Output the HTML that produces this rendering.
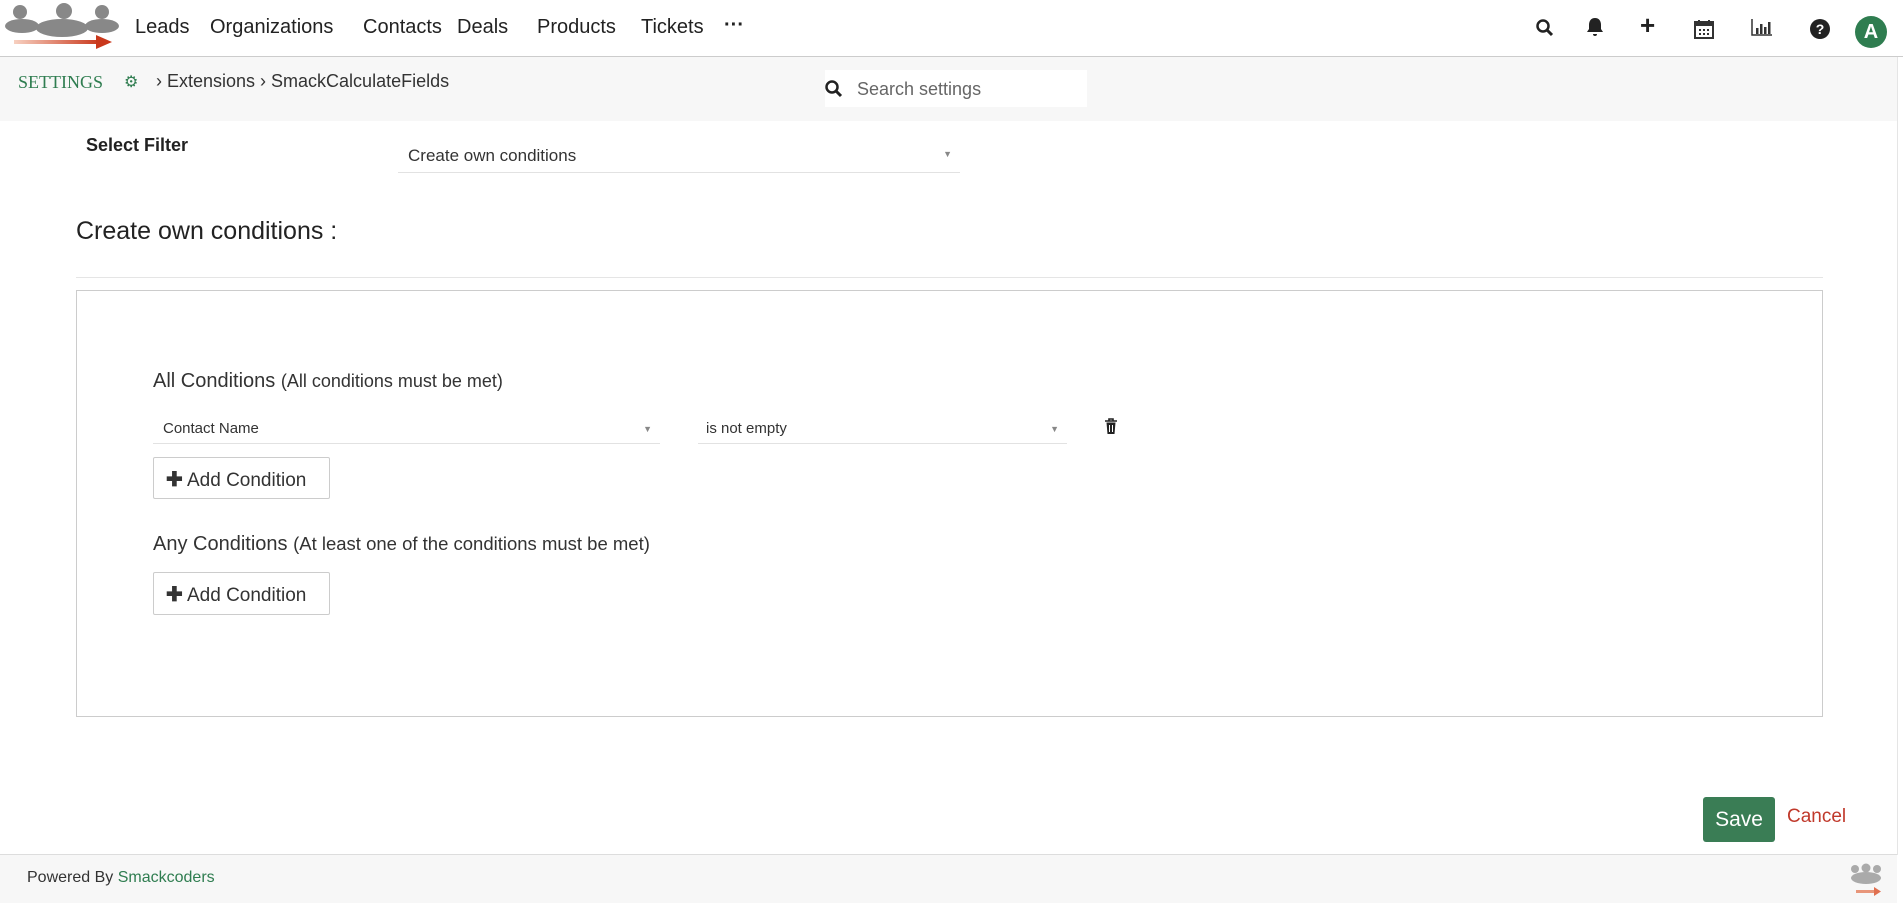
<!DOCTYPE html>
<html><head><meta charset="utf-8"><style>
*{box-sizing:border-box;margin:0;padding:0}
body{width:1903px;height:903px;position:relative;background:#fff;font-family:"Liberation Sans",sans-serif;color:#333;overflow:hidden}
.a{position:absolute;white-space:nowrap}
.nav{font-size:20px;color:#222;top:16px}
.sel{position:absolute;border-bottom:1px solid #e2e2e2;font-size:16px;color:#333}
.sel .ar{position:absolute;right:8px;top:9px;font-size:9px;color:#888}
.btn{position:absolute;border:1px solid #ccc;border-radius:2px;background:#fff;font-size:19px;color:#333;padding:9px 12px}
</style></head><body>
<div class="a" style="left:0;top:0;width:1903px;height:57px;border-bottom:1px solid #ccc;background:#fff"></div>
<svg class="a" style="left:2px;top:2px" width="120" height="48" viewBox="0 0 120 48">
<g fill="#888"><circle cx="18" cy="10" r="7"/><circle cx="62" cy="9" r="8"/><circle cx="100" cy="10" r="7"/>
<ellipse cx="20" cy="24" rx="17" ry="7"/><ellipse cx="100" cy="24" rx="17" ry="7"/><ellipse cx="60" cy="26" rx="26" ry="9"/></g>
<defs><linearGradient id="g" x1="0" x2="1"><stop offset="0" stop-color="#f7d0c0"/><stop offset="1" stop-color="#c9381c"/></linearGradient></defs>
<rect x="12" y="38" width="86" height="4" fill="url(#g)"/><polygon points="94,33 110,40 94,47" fill="#c9381c"/></svg>
<div class="a nav" style="left:135px">Leads</div>
<div class="a nav" style="left:210px">Organizations</div>
<div class="a nav" style="left:363px">Contacts</div>
<div class="a nav" style="left:457px">Deals</div>
<div class="a nav" style="left:537px">Products</div>
<div class="a nav" style="left:641px">Tickets</div>
<div class="a" style="left:724px;top:14px;font-size:20px;font-weight:bold;color:#222">···</div>
<svg class="a" style="left:1535px;top:18px" width="20" height="20" viewBox="0 0 20 20"><circle cx="8" cy="8" r="5.5" fill="none" stroke="#222" stroke-width="2.5"/><path d="M12 12l5 5" stroke="#222" stroke-width="3"/></svg>
<svg class="a" style="left:1586px;top:17px" width="18" height="20" viewBox="0 0 18 20"><path d="M9 1c-4 0-6 3-6 7v4l-2 3h16l-2-3V8c0-4-2-7-6-7z M7 17h4a2 2 0 01-4 0z" fill="#222"/></svg>
<div class="a" style="left:1640px;top:10px;font-size:26px;font-weight:bold;color:#222">+</div>
<svg class="a" style="left:1693px;top:18px" width="22" height="22" viewBox="0 0 22 22"><rect x="2" y="4" width="18" height="16" fill="none" stroke="#333" stroke-width="2"/><rect x="2" y="4" width="18" height="4" fill="#333"/><path d="M6 2v4M16 2v4" stroke="#333" stroke-width="2"/><g fill="#333"><rect x="6" y="11" width="2" height="2"/><rect x="10" y="11" width="2" height="2"/><rect x="14" y="11" width="2" height="2"/><rect x="6" y="15" width="2" height="2"/><rect x="10" y="15" width="2" height="2"/><rect x="14" y="15" width="2" height="2"/></g></svg>
<svg class="a" style="left:1751px;top:18px" width="22" height="20" viewBox="0 0 22 20"><path d="M1 1v16h20" fill="none" stroke="#333" stroke-width="1.5"/><g fill="#333"><rect x="5" y="10" width="2.5" height="6"/><rect x="9" y="6" width="2.5" height="10"/><rect x="13" y="9" width="2.5" height="7"/><rect x="17" y="4" width="2.5" height="12"/></g></svg>
<svg class="a" style="left:1810px;top:19px" width="20" height="20" viewBox="0 0 20 20"><circle cx="10" cy="10" r="10" fill="#222"/><text x="10" y="15" font-family="Liberation Sans" font-weight="bold" font-size="14" fill="#fff" text-anchor="middle">?</text></svg>
<div class="a" style="left:1855px;top:16px;width:32px;height:32px;border-radius:50%;background:#2f7d50;color:#fff;font-weight:bold;font-size:20px;text-align:center;line-height:32px">A</div>
<div class="a" style="left:0;top:57px;width:1897px;height:64px;background:#f7f7f7"></div>
<div class="a" style="left:1897px;top:57px;width:6px;height:798px;background:#fff;border-left:1px solid #e5e5e5"></div>
<div class="a" style="left:18px;top:72px;font-size:18px;color:#2f7d50;font-family:'Liberation Serif',serif">SETTINGS</div>
<div class="a" style="left:124px;top:72px;font-size:16px;color:#2f7d50">⚙</div>
<div class="a" style="left:156px;top:71px;font-size:18px;color:#333">› Extensions › SmackCalculateFields</div>
<div class="a" style="left:825px;top:70px;width:262px;height:37px;background:#fff"></div>
<svg class="a" style="left:824px;top:79px" width="20" height="20" viewBox="0 0 20 20"><circle cx="8" cy="8" r="5.5" fill="none" stroke="#222" stroke-width="2.5"/><path d="M12 12l5 5" stroke="#222" stroke-width="3"/></svg>
<div class="a" style="left:857px;top:79px;font-size:18px;color:#666">Search settings</div>
<div class="a" style="left:86px;top:135px;font-size:18px;font-weight:bold;color:#222">Select Filter</div>
<div class="sel" style="left:398px;top:140px;width:562px;height:33px"><span style="position:absolute;left:10px;top:6px;font-size:17px">Create own conditions</span><span class="ar">▼</span></div>
<div class="a" style="left:76px;top:217px;font-size:25px;color:#222">Create own conditions :</div>
<div class="a" style="left:76px;top:277px;width:1747px;height:1px;background:#e5e5e5"></div>
<div class="a" style="left:76px;top:290px;width:1747px;height:427px;border:1px solid #ccc"></div>
<div class="a" style="left:153px;top:370px;font-size:20px;color:#333">All Conditions <span style="font-size:18px">(All conditions must be met)</span></div>
<div class="sel" style="left:153px;top:415px;width:507px;height:29px"><span style="position:absolute;left:10px;top:5px;font-size:15px">Contact Name</span><span class="ar">▼</span></div>
<div class="sel" style="left:698px;top:415px;width:369px;height:29px"><span style="position:absolute;left:8px;top:5px;font-size:15px">is not empty</span><span class="ar">▼</span></div>
<svg class="a" style="left:1104px;top:418px" width="14" height="17" viewBox="0 0 14 17"><path d="M1 3h12M5 3V1h4v2" stroke="#222" stroke-width="1.6" fill="none"/><path d="M2.5 4.5h9l-1 11.5h-7z" fill="#222"/><path d="M5.5 7v7M8.5 7v7" stroke="#fff" stroke-width="1"/></svg>
<div class="btn" style="left:153px;top:457px;width:177px;height:42px"><b style="font-size:20px">✚</b> Add Condition</div>
<div class="a" style="left:153px;top:533px;font-size:20px;color:#333">Any Conditions <span style="font-size:18.5px">(At least one of the conditions must be met)</span></div>
<div class="btn" style="left:153px;top:572px;width:177px;height:43px"><b style="font-size:20px">✚</b> Add Condition</div>
<div class="a" style="left:1703px;top:797px;width:72px;height:45px;background:#3a7d55;border-radius:3px;color:#fff;font-size:21px;text-align:center;line-height:45px">Save</div>
<div class="a" style="left:1787px;top:806px;font-size:19px;color:#c0392b">Cancel</div>
<div class="a" style="left:0;top:854px;width:1897px;height:49px;background:#f7f7f7;border-top:1px solid #ddd"></div>
<div class="a" style="left:27px;top:869px;font-size:16px;color:#333">Powered By <span style="color:#2f7d50">Smackcoders</span></div>
<svg class="a" style="left:1848px;top:862px" width="36" height="36" viewBox="0 0 36 36"><g fill="#aaa"><circle cx="7" cy="7" r="4"/><circle cx="18" cy="6" r="4.5"/><circle cx="29" cy="7" r="4"/><ellipse cx="18" cy="16" rx="15" ry="6"/></g><rect x="8" y="28" width="20" height="3" fill="#e8967a"/><polygon points="26,25 33,29.5 26,34" fill="#e07050"/></svg>
</body></html>
